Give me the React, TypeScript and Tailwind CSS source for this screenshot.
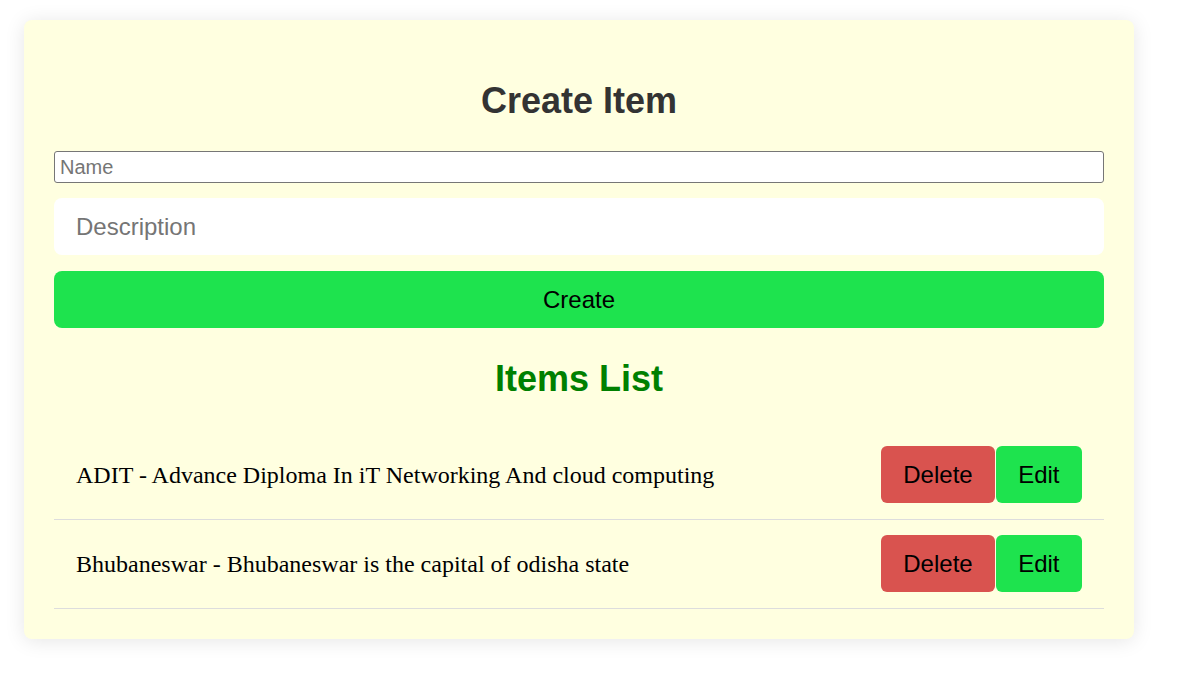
import { useState } from 'react';

interface Item {
  name: string;
  description: string;
}

export default function App() {
  const [items, setItems] = useState<Item[]>([
    { name: 'ADIT', description: 'Advance Diploma In iT Networking And cloud computing' },
    { name: 'Bhubaneswar', description: 'Bhubaneswar is the capital of odisha state' },
  ]);
  const [name, setName] = useState('');
  const [description, setDescription] = useState('');

  const handleCreate = () => {
    if (!name.trim()) return;
    setItems([...items, { name: name.trim(), description: description.trim() }]);
    setName('');
    setDescription('');
  };

  return (
    <div className="min-h-[678px] bg-white pt-[20px] pl-[24px] font-['Liberation_Sans',Arial,sans-serif]">
      <div className="w-[1110px] bg-[#ffffe0] rounded-[8px] shadow-[0_2px_20px_rgba(0,0,0,0.1)] px-[30px] pt-[30px] pb-[30px]">
        <h2 className="text-[36px] leading-[41px] font-bold text-[#333] text-center my-[30px]">Create Item</h2>

        <input
          value={name}
          onChange={(e) => setName(e.target.value)}
          placeholder="Name"
          className="block w-full h-[32px] bg-white border border-[#767676] rounded-[3px] px-[5px] text-[20px] text-black placeholder:text-[#757575] outline-none"
        />
        <input
          value={description}
          onChange={(e) => setDescription(e.target.value)}
          placeholder="Description"
          className="block w-full h-[57px] mt-[15px] bg-white rounded-[8px] px-[22px] text-[24px] text-black placeholder:text-[#757575] outline-none"
        />
        <button
          onClick={handleCreate}
          className="block w-full h-[57px] mt-[16px] bg-[#1ee34e] rounded-[8px] text-[24px] text-black"
        >
          Create
        </button>

        <h2 className="text-[36px] leading-[41px] font-bold text-[#008000] text-center mt-[30px] mb-[32px]">Items List</h2>

        <ul>
          {items.map((item, idx) => (
            <li
              key={idx}
              className="flex items-center justify-between pt-[15px] pb-[16px] px-[22px] border-b border-[#dddddd]"
            >
              <span className="font-['Liberation_Serif','Times_New_Roman',serif] text-[24px] text-black">
                {item.name} - {item.description}
              </span>
              <div className="flex gap-px">
                <button
                  onClick={() => setItems(items.filter((_, i) => i !== idx))}
                  className="h-[57px] px-[22px] bg-[#d9534f] rounded-[6px] text-[24px] text-black"
                >
                  Delete
                </button>
                <button className="h-[57px] px-[22.5px] bg-[#1ee34e] rounded-[6px] text-[24px] text-black">
                  Edit
                </button>
              </div>
            </li>
          ))}
        </ul>
      </div>
    </div>
  );
}
